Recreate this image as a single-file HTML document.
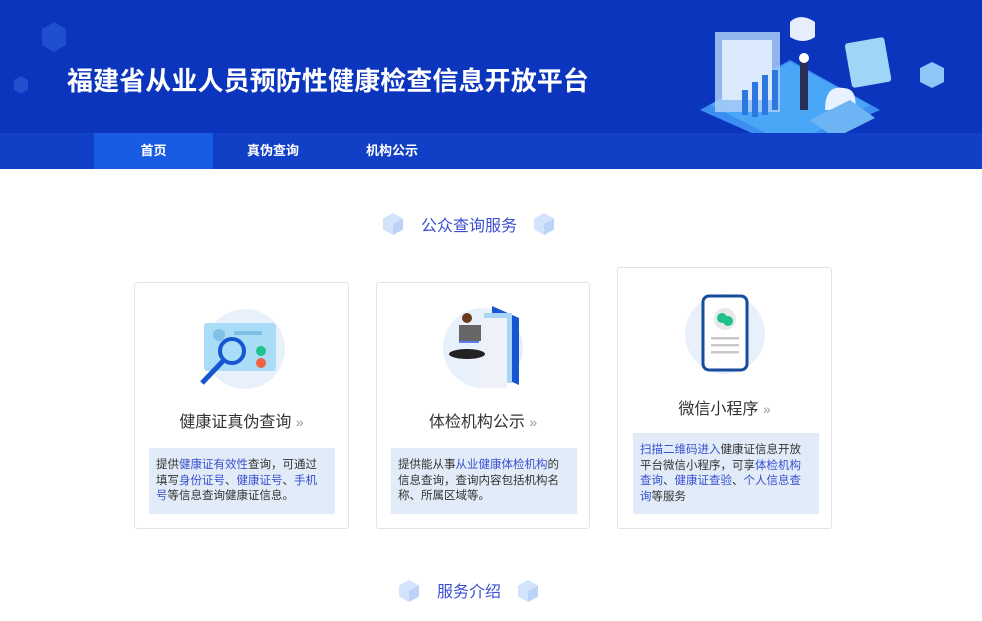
<!DOCTYPE html>
<html><head><meta charset="utf-8"><style>
*{margin:0;padding:0;box-sizing:border-box}
body{width:982px;height:621px;overflow:hidden;background:#fff;font-family:"Liberation Sans","Noto Sans CJK SC",sans-serif;position:relative}
.hd{position:absolute;left:0;top:0;width:982px;height:133px;background:#0c35bd}
.nav{position:absolute;left:0;top:133px;width:982px;height:36px;background:#1140c6}
.nav div{position:absolute;top:0;height:36px;line-height:36px;color:#fff;font-size:13px;font-weight:bold;text-align:center}
.title{position:absolute;left:67px;top:61px;color:#fff;font-size:26px;font-weight:bold;letter-spacing:0.1px;white-space:nowrap}
.sec{position:absolute;color:#3a4fd0;font-size:16px;white-space:nowrap}
.cube{position:absolute;width:20px;height:22px}
.card{position:absolute;background:#fff;border:1px solid #e2e4ea;border-radius:3px}
.ct{position:absolute;left:0;width:100%;text-align:center;font-size:16px;color:#333}
.ct span{color:#999;font-size:14px}
.desc{position:absolute;background:#e2ecf8;font-size:11.5px;line-height:15.5px;color:#333;padding:10px 7px}
.b{color:#3a4fd0}
.circ{position:absolute;border-radius:50%;background:#e8f0fb}
</style></head><body>
<div class="hd">
<svg width="982" height="133" style="position:absolute;left:0;top:0">
<polygon points="54,22 66,29 66,45 54,52 42,45 42,29" fill="#2f5fdc" opacity=".6"/>
<polygon points="21,76 28,80 28,90 21,94 14,90 14,80" fill="#3a6ae0" opacity=".5"/>
<polygon points="700,110 790,60 880,110 790,150" fill="#3c8ef0"/>
<polygon points="710,105 790,62 870,105 790,145" fill="#4aa6f6"/>
<rect x="715" y="32" width="65" height="80" fill="#a9cdf8" opacity=".85"/>
<rect x="722" y="40" width="50" height="60" fill="#dbe9fc"/>
<rect x="742" y="90" width="6" height="25" fill="#2d78e0"/><rect x="752" y="82" width="6" height="35" fill="#2d78e0"/><rect x="762" y="75" width="6" height="40" fill="#2d78e0"/><rect x="772" y="70" width="6" height="40" fill="#2d78e0"/>
<rect x="800" y="60" width="8" height="50" fill="#2a2f5a"/><circle cx="804" cy="58" r="5" fill="#fff"/>
<path d="M790 22 q10-10 25 0 v15 q-12 8-25 0z" fill="#e6eefc"/>
<rect x="848" y="40" width="40" height="45" rx="3" fill="#9fd6f8" transform="rotate(-10 868 62)"/>
<polygon points="932,62 944,68 944,82 932,88 920,82 920,68" fill="#8fc5f8"/>
<path d="M825 110 q0-25 18-22 q15 0 12 22z" fill="#e8f1ff"/>
<polygon points="810,120 850,100 875,118 835,138" fill="#6cb4f4"/>
</svg>
<div class="title">福建省从业人员预防性健康检查信息开放平台</div>
</div>
<div class="nav">
<div style="left:94px;width:119px;background:#175ce3">首页</div>
<div style="left:233px;width:80px">真伪查询</div>
<div style="left:352px;width:80px">机构公示</div>
</div>

<svg class="cube" style="left:383px;top:213px" viewBox="0 0 20 22"><polygon points="10,0 20,5.5 20,16.5 10,22 0,16.5 0,5.5" fill="#d3e3fb"/><polygon points="10,11 20,5.5 20,16.5 10,22" fill="#bcd3f7"/></svg>
<div class="sec" style="left:421px;top:212px">公众查询服务</div>
<svg class="cube" style="left:534px;top:213px" viewBox="0 0 20 22"><polygon points="10,0 20,5.5 20,16.5 10,22 0,16.5 0,5.5" fill="#d3e3fb"/><polygon points="10,11 20,5.5 20,16.5 10,22" fill="#bcd3f7"/></svg>

<div class="card" style="left:134px;top:282px;width:215px;height:247px">
<div class="circ" style="left:70px;top:26px;width:80px;height:80px"></div>
<svg style="position:absolute;left:64px;top:38px" width="85" height="66"><rect x="5" y="2" width="72" height="48" rx="3" fill="#a9dcf6"/><circle cx="20" cy="14" r="6" fill="#7fc0e8"/><rect x="35" y="10" width="28" height="4" fill="#7fc0e8"/><circle cx="62" cy="30" r="5" fill="#1ec18a"/><circle cx="62" cy="42" r="5" fill="#f0613c"/><circle cx="33" cy="30" r="12" fill="none" stroke="#1656d3" stroke-width="4"/><line x1="24" y1="40" x2="3" y2="62" stroke="#1656d3" stroke-width="5"/></svg>
<div class="ct" style="top:125px">健康证真伪查询 <span>»</span></div>
<div class="desc" style="left:14px;top:165px;width:186px;height:66px">提供<span class="b">健康证有效性</span>查询，可通过填写<span class="b">身份证号</span>、<span class="b">健康证号</span>、<span class="b">手机号</span>等信息查询健康证信息。</div>
</div>

<div class="card" style="left:376px;top:282px;width:214px;height:247px">
<div class="circ" style="left:66px;top:25px;width:80px;height:80px"></div>
<svg style="position:absolute;left:70px;top:20px" width="80" height="85"><polygon points="45,3 72,15 72,82 45,70" fill="#1656d3"/><rect x="37" y="10" width="28" height="70" fill="#aad4f3"/><rect x="32" y="15" width="28" height="70" fill="#eef2f8"/><circle cx="20" cy="15" r="5" fill="#6b3a1d"/><rect x="12" y="22" width="20" height="18" fill="#5a7ef0"/><rect x="12" y="22" width="22" height="16" fill="#666"/><ellipse cx="20" cy="51" rx="18" ry="5" fill="#222"/></svg>
<div class="ct" style="top:125px">体检机构公示 <span>»</span></div>
<div class="desc" style="left:14px;top:165px;width:186px;height:66px">提供能从事<span class="b">从业健康体检机构</span>的信息查询，查询内容包括机构名称、所属区域等。</div>
</div>

<div class="card" style="left:617px;top:267px;width:215px;height:262px">
<div class="circ" style="left:67px;top:26px;width:80px;height:80px"></div>
<svg style="position:absolute;left:83px;top:26px" width="50" height="80"><rect x="2" y="2" width="44" height="74" rx="6" fill="#fff" stroke="#174b9c" stroke-width="3"/><circle cx="24" cy="25" r="11" fill="#e8e8e8"/><circle cx="21" cy="24" r="5" fill="#1ec18a"/><circle cx="27" cy="27" r="5" fill="#1ec18a"/><rect x="10" y="43" width="28" height="2.5" fill="#c8c8c8"/><rect x="10" y="50" width="28" height="2.5" fill="#c8c8c8"/><rect x="10" y="57" width="28" height="2.5" fill="#c8c8c8"/></svg>
<div class="ct" style="top:127px">微信小程序 <span>»</span></div>
<div class="desc" style="left:15px;top:165px;width:186px;height:81px"><span class="b">扫描二维码进入</span>健康证信息开放平台微信小程序，可享<span class="b">体检机构查询</span>、<span class="b">健康证查验</span>、<span class="b">个人信息查询</span>等服务</div>
</div>

<svg class="cube" style="left:399px;top:580px" viewBox="0 0 20 22"><polygon points="10,0 20,5.5 20,16.5 10,22 0,16.5 0,5.5" fill="#d3e3fb"/><polygon points="10,11 20,5.5 20,16.5 10,22" fill="#bcd3f7"/></svg>
<div class="sec" style="left:437px;top:578px">服务介绍</div>
<svg class="cube" style="left:518px;top:580px" viewBox="0 0 20 22"><polygon points="10,0 20,5.5 20,16.5 10,22 0,16.5 0,5.5" fill="#d3e3fb"/><polygon points="10,11 20,5.5 20,16.5 10,22" fill="#bcd3f7"/></svg>
</body></html>
